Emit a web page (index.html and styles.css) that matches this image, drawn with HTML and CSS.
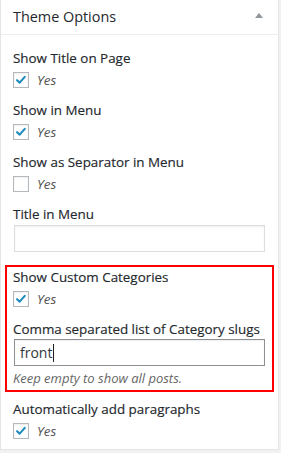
FILE: index.html
```html
<!DOCTYPE html>
<html>
<head>
<meta charset="utf-8">
<link rel="stylesheet" href="styles.css">
</head>
<body>
<div class="postbox">
  <div class="postbox-header">
    <h2 class="postbox-title">Theme Options</h2>
    <svg class="toggle" width="8" height="5" viewBox="0 0 8 5"><path d="M0 5 L4 0 L8 5 Z" fill="#8f959a"/></svg>
  </div>
  <div class="postbox-body">
    <div class="field">
      <div class="field-label">Show Title on Page</div>
      <label class="check-row"><span class="checkbox checked"><svg viewBox="0 0 16 16"><path d="M3.5 8.2 L6.5 11 L12.3 4.4" fill="none" stroke="#1e8cbe" stroke-width="2.4" stroke-linecap="round" stroke-linejoin="round"/></svg></span><span class="yes">Yes</span></label>
    </div>
    <div class="field">
      <div class="field-label">Show in Menu</div>
      <label class="check-row"><span class="checkbox checked"><svg viewBox="0 0 16 16"><path d="M3.5 8.2 L6.5 11 L12.3 4.4" fill="none" stroke="#1e8cbe" stroke-width="2.4" stroke-linecap="round" stroke-linejoin="round"/></svg></span><span class="yes">Yes</span></label>
    </div>
    <div class="field">
      <div class="field-label">Show as Separator in Menu</div>
      <label class="check-row"><span class="checkbox"></span><span class="yes">Yes</span></label>
    </div>
    <div class="field field-text">
      <div class="field-label">Title in Menu</div>
      <div class="text-input"></div>
    </div>
    <div class="highlight">
      <div class="field">
        <div class="field-label">Show Custom Categories</div>
        <label class="check-row"><span class="checkbox checked"><svg viewBox="0 0 16 16"><path d="M3.5 8.2 L6.5 11 L12.3 4.4" fill="none" stroke="#1e8cbe" stroke-width="2.4" stroke-linecap="round" stroke-linejoin="round"/></svg></span><span class="yes">Yes</span></label>
      </div>
      <div class="field field-slugs">
        <div class="field-label">Comma separated list of Category slugs</div>
        <div class="text-input focused">front<span class="caret"></span></div>
        <div class="help">Keep empty to show all posts.</div>
      </div>
    </div>
    <div class="field field-last">
      <div class="field-label">Automatically add paragraphs</div>
      <label class="check-row"><span class="checkbox checked"><svg viewBox="0 0 16 16"><path d="M3.5 8.2 L6.5 11 L12.3 4.4" fill="none" stroke="#1e8cbe" stroke-width="2.4" stroke-linecap="round" stroke-linejoin="round"/></svg></span><span class="yes">Yes</span></label>
    </div>
  </div>
</div>
</body>
</html>
```
FILE: styles.css
```css
html, body {
  margin: 0;
  padding: 0;
  background: #f1f1f1;
}
body {
  font-family: "Open Sans", "DejaVu Sans", sans-serif;
  font-size: 13.4px;
  color: #23282d;
}
.postbox {
  box-sizing: border-box;
  width: 279px;
  height: 450px;
  background: #fff;
  border: 1px solid #e5e5e5;
  border-top: none;
}
.postbox-header {
  height: 34px;
  border-bottom: 1px solid #eee;
  display: flex;
  align-items: center;
  justify-content: space-between;
  padding: 0 15px 0 12px;
}
.postbox-title {
  margin: 0;
  font-size: 14.4px;
  font-weight: 400;
  line-height: 20px;
  color: #23282d;
}
.toggle {
  display: block;
  margin-top: -4px;
}
.postbox-body {
  padding: 13px 12px 10px;
}
.field {
  padding-bottom: 12px;
}
.field-label {
  line-height: 20px;
  height: 20px;
  white-space: nowrap;
  -webkit-text-stroke: 0.15px #23282d;
}
.check-row {
  display: flex;
  align-items: center;
  gap: 8px;
  margin-top: 4px;
  height: 16px;
}
.checkbox {
  box-sizing: border-box;
  width: 16px;
  height: 16px;
  border: 1px solid #b4b9be;
  background: #fff;
  box-shadow: inset 0 1px 2px rgba(0,0,0,0.07);
  display: block;
  flex: none;
}
.checkbox svg {
  display: block;
  width: 14px;
  height: 14px;
}
.yes {
  font-style: italic;
  color: #555;
  line-height: 16px;
}
.text-input {
  box-sizing: border-box;
  height: 27px;
  margin: 1px 1px 0;
  border: 1px solid #ddd;
  box-shadow: inset 0 1px 2px rgba(0,0,0,0.07);
  background: #fff;
}
.field-text {
  padding-bottom: 13px;
}
.highlight {
  margin: 0 -8px;
  border: 2px solid #f00;
  padding: 0 6px;
}
.field-slugs {
  padding-bottom: 2px;
}
.field-slugs .text-input {
  margin-top: 0;
}
.text-input.focused {
  border-color: #8c8f94;
  font-size: 14px;
  line-height: 25px;
  padding-left: 5px;
  color: #32373c;
  display: flex;
  align-items: center;
}
.caret {
  display: inline-block;
  width: 1px;
  height: 18px;
  background: #222;
  margin-left: 1px;
}
.help {
  font-style: italic;
  font-size: 13px;
  color: #666;
  line-height: 20px;
  margin-top: 2px;
}
.field-last {
  margin-top: 7px;
  padding-bottom: 0;
}
```
